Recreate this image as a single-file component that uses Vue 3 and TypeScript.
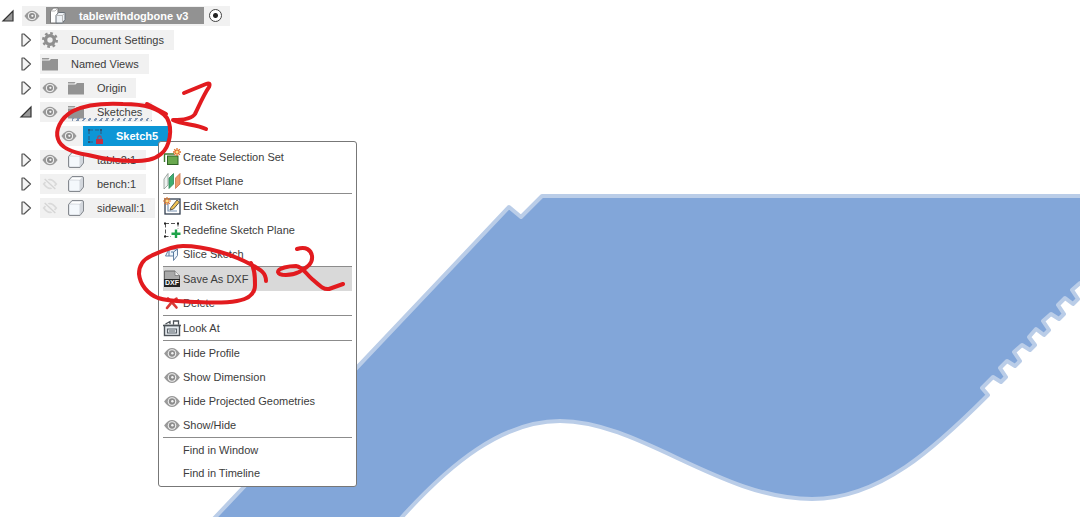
<script setup lang="ts">
import { ref } from 'vue'

interface TreeNode {
  id: string
  label: string
  icon: string
  level: 'root' | 'child' | 'leaf'
  expanded?: boolean
  visible?: boolean
}

interface MenuItem {
  label: string
  icon?: string
}

const nodes = ref<TreeNode[]>([
  { id: 'root', label: 'tablewithdogbone v3', icon: 'assembly', level: 'root', expanded: true, visible: true },
  { id: 'settings', label: 'Document Settings', icon: 'gear', level: 'child', expanded: false },
  { id: 'views', label: 'Named Views', icon: 'folder', level: 'child', expanded: false },
  { id: 'origin', label: 'Origin', icon: 'folder', level: 'child', expanded: false, visible: true },
  { id: 'sketches', label: 'Sketches', icon: 'folder', level: 'child', expanded: true, visible: true },
  { id: 'sketch5', label: 'Sketch5', icon: 'sketch', level: 'leaf', visible: true },
  { id: 'table2', label: 'table2:1', icon: 'body', level: 'child', expanded: false, visible: true },
  { id: 'bench', label: 'bench:1', icon: 'body', level: 'child', expanded: false, visible: false },
  { id: 'sidewall', label: 'sidewall:1', icon: 'body', level: 'child', expanded: false, visible: false },
])

const selected = ref('sketch5')
const activeItem = ref('Save As DXF')

const groups: MenuItem[][] = [
  [
    { label: 'Create Selection Set', icon: 'selection' },
    { label: 'Offset Plane', icon: 'offset' },
  ],
  [
    { label: 'Edit Sketch', icon: 'edit' },
    { label: 'Redefine Sketch Plane', icon: 'redefine' },
    { label: 'Slice Sketch', icon: 'slice' },
  ],
  [
    { label: 'Save As DXF', icon: 'dxf' },
    { label: 'Delete', icon: 'delete' },
  ],
  [{ label: 'Look At', icon: 'look' }],
  [
    { label: 'Hide Profile', icon: 'eye' },
    { label: 'Show Dimension', icon: 'eye' },
    { label: 'Hide Projected Geometries', icon: 'eye' },
    { label: 'Show/Hide', icon: 'eye' },
  ],
  [{ label: 'Find in Window' }, { label: 'Find in Timeline' }],
]
</script>

<template>
  <main class="stage">
    <svg class="defs" aria-hidden="true">
      <symbol id="eye" viewBox="0 0 18 14">
        <path d="M0.5 7C3.5 2.6 6 1 9 1S14.5 2.6 17.5 7C14.5 11.4 12 13 9 13S3.5 11.4 0.5 7Z" fill="#999" />
        <circle cx="9" cy="7" r="4.6" fill="#f0f0f0" />
        <circle cx="9" cy="7" r="3.4" fill="#8c8c8c" />
        <circle cx="9.4" cy="6.8" r="1.3" fill="#f4f4f4" />
      </symbol>
      <symbol id="eye-off" viewBox="0 0 18 14">
        <path d="M2 7C5 3 7 2 9 2S13 3 16 7C13 11 11 12 9 12S5 11 2 7Z" fill="none" stroke="#dadada" stroke-width="2" />
        <circle cx="9" cy="7" r="2" fill="#dadada" />
        <path d="M3 1L15 13" stroke="#f1f1f1" stroke-width="4" />
        <path d="M3 1.5L15 12.5" stroke="#d4d4d4" stroke-width="1.5" />
      </symbol>
      <symbol id="open" viewBox="0 0 14 14">
        <path d="M12 2V12H2Z" fill="#999" stroke="#333" stroke-width="1.2" />
      </symbol>
      <symbol id="closed" viewBox="0 0 14 14">
        <path d="M3 1H5L11.5 7L5 13H3Z" fill="#f4f4f4" stroke="#555" stroke-width="1.2" stroke-linejoin="round" />
      </symbol>
      <symbol id="gear" viewBox="0 0 20 20">
        <circle cx="10" cy="10" r="4.4" fill="none" stroke="#8f8f8f" stroke-width="3.4" />
        <circle cx="10" cy="10" r="6.7" fill="none" stroke="#8f8f8f" stroke-width="2.6" stroke-dasharray="2.63 2.63" />
      </symbol>
      <symbol id="folder" viewBox="0 0 20 20">
        <path d="M2 4H9.5L8.5 5.5H2Z" fill="#999" />
        <path d="M2 6.5H9.5L11 5H18V16.5H2Z" fill="#939393" />
      </symbol>
      <symbol id="assembly" viewBox="0 0 20 20">
        <path d="M2.5 5L5.5 2H10V17H2.5Z" fill="#fff" stroke="#777" />
        <path d="M2.5 5H7L10 2" fill="none" stroke="#999" stroke-width=".7" />
        <path d="M8 9.5L10.5 6.5H17V13.5L14.5 17H8Z" fill="#eef2f6" stroke="#687078" />
        <path d="M8.5 9.5H14.5L17 6.5M14.5 9.5V16.5" fill="none" stroke="#aaa" stroke-width=".8" />
      </symbol>
      <symbol id="body" viewBox="0 0 20 20">
        <path d="M2.5 6.5L6 2.5H16Q17.5 2.5 17.5 4V13L14 17.5H4Q2.5 17.5 2.5 16Z" fill="#d3d7dd" stroke="#85898f" stroke-linejoin="round" />
        <rect x="3.5" y="6.5" width="10" height="10" rx="1" fill="#f4f8fc" />
        <path d="M4 5.5L6.5 3.5H16L13.8 5.8Z" fill="#fff" />
      </symbol>
      <symbol id="sketch" viewBox="0 0 20 20">
        <path d="M4 4H16V10M4 4V16H10" fill="none" stroke="#2b6188" stroke-width="1.2" stroke-dasharray="4 2" />
        <path d="M3 3H5V5H3ZM15 3H17V5H15ZM3 15H5V17H3Z" fill="#2b5578" />
        <path d="M12.8 13V11.5Q12.8 9.8 14.5 9.8T16.2 11.5V13" fill="none" stroke="#9c4763" stroke-width="1.2" />
        <rect x="11" y="13" width="7" height="5" fill="#c72f43" />
      </symbol>
      <symbol id="selection" viewBox="0 0 18 18">
        <path d="M1.5 14V6H11" fill="none" stroke="#3d7a2f" stroke-width="1.4" />
        <rect x="4.5" y="8" width="10.5" height="8.5" fill="#69a84e" stroke="#2f6426" />
        <path d="M14 0V8M10 4H18M11.2 1.2L16.8 6.8M16.8 1.2L11.2 6.8" stroke="#e0702a" stroke-width="1.3" />
        <circle cx="14" cy="4" r="1.5" fill="#ffe08a" />
      </symbol>
      <symbol id="offset" viewBox="0 0 18 18">
        <path d="M1 7L5 1.5V13L1 17Z" fill="#eef2f1" stroke="#8b9690" stroke-width=".8" />
        <path d="M6 6L10.5 1.5V12L6 16.5Z" fill="#3fae72" stroke="#2d8757" stroke-width=".8" />
        <path d="M12.5 6L17 1.5V12L12.5 16.5Z" fill="#ee9a6c" stroke="#cb744a" stroke-width=".8" />
      </symbol>
      <symbol id="edit" viewBox="0 0 18 18">
        <rect x="2" y="2" width="15" height="15" fill="#fff" stroke="#333f50" stroke-width="1.3" />
        <path d="M5 6V14H14" fill="none" stroke="#7894b4" stroke-width="1.2" />
        <path d="M8 10.5L14 3L16.5 5L10.5 12L7 13Z" fill="#f0c254" stroke="#4e4b44" stroke-width=".9" />
        <path d="M4 0V8M0 4H8M1.2 1.2L6.8 6.8M6.8 1.2L1.2 6.8" stroke="#e0752a" stroke-width="1.1" />
        <circle cx="4" cy="4" r="1.5" fill="#ffe08a" />
      </symbol>
      <symbol id="redefine" viewBox="0 0 18 18">
        <path d="M2 2.5H15V8M2.5 2.5V15.5H8" fill="none" stroke="#555" stroke-dasharray="4 2" />
        <path d="M1 1.5H3V3.5H1ZM14 1.5H16V3.5H14ZM1 14.5H3V16.5H1Z" fill="#222" />
        <path d="M13 8.5V17M8.5 12.7H17.5" stroke="#1fa34a" stroke-width="2.4" />
      </symbol>
      <symbol id="slice" viewBox="0 0 18 18">
        <path d="M2.5 11L6 4H14.5V10.5L10.5 15.5V11Z" fill="#edf4fb" stroke="#6682a3" />
        <path d="M6 4V11M10.5 11V7L14.5 4M8 7H10.5" fill="none" stroke="#54799f" />
      </symbol>
      <symbol id="dxf" viewBox="0 0 18 18">
        <path d="M1.5 1H12L16.5 5.5V10H1.5Z" fill="#a9a9a9" stroke="#666" />
        <path d="M12 1V5.5H16.5" fill="#eee" stroke="#777" stroke-width=".8" />
        <rect x="1" y="9" width="16" height="8" fill="#252525" />
      </symbol>
      <symbol id="delete" viewBox="0 0 18 18">
        <path d="M5 4.5Q9 8 13.5 13.5M13.5 4.5Q8 8 4 14" fill="none" stroke="#d93a36" stroke-width="2.6" stroke-linecap="round" />
      </symbol>
      <symbol id="look" viewBox="0 0 18 18">
        <rect x="1.5" y="6.5" width="15" height="10" fill="#e9eef2" stroke="#4d5359" stroke-width="1.4" />
        <path d="M4.5 10H13.5V14H4.5ZM6 12H12" fill="none" stroke="#565e66" stroke-width="1.2" />
        <path d="M0 6.5H18M2.5 5L7 2.5V5M10.5 5.5V2H15.5V5.5" fill="none" stroke="#4d5359" stroke-width="1.3" />
      </symbol>
    </svg>

    <svg class="canvas" viewBox="0 0 1080 517" preserveAspectRatio="xMinYMin slice" role="img" aria-label="Table profile sketch">
      <path
        class="profile"
        d="M1090 196H542L521 217L509 207L205 528H392L402 517C450 464 502 421 560 421C640 421 720 499 812 499C880 499 935 448 988 395L982 388L993 377L1001 382L1006 377L1000 368L1007 361L1015 366L1020 361L1014 352L1022 345L1030 350L1035 345L1029 337L1036 329L1044 335L1049 330L1043 321L1051 314L1059 319L1064 314L1058 305L1065 298L1073 304L1078 299L1072 290L1080 283L1088 288V283Z"
      />
    </svg>

    <nav class="browser" aria-label="Browser">
      <ul class="tree">
        <li v-for="node in nodes" :key="node.id" class="row" :class="node.level">
          <button
            v-if="node.expanded !== undefined"
            type="button"
            class="toggle"
            :aria-label="`Toggle ${node.label}`"
            :aria-expanded="node.expanded"
            @click="node.expanded = !node.expanded"
          >
            <svg><use :href="node.expanded ? '#open' : '#closed'" /></svg>
          </button>
          <div class="pill">
            <button
              v-if="node.visible !== undefined"
              type="button"
              class="eye"
              :aria-label="`Visibility of ${node.label}`"
              :aria-pressed="node.visible"
              @click="node.visible = !node.visible"
            >
              <svg><use :href="node.visible ? '#eye' : '#eye-off'" /></svg>
            </button>
            <button
              type="button"
              class="label"
              :class="{ selected: selected === node.id, bare: node.visible === undefined, parent: node.id === 'sketches' }"
              @click="selected = node.id"
            >
              <svg class="node-icon"><use :href="`#${node.icon}`" /></svg>
              <span>{{ node.label }}</span>
            </button>
            <input v-if="node.level === 'root'" type="radio" class="activate" checked aria-label="Activate component" />
          </div>
        </li>
      </ul>
    </nav>

    <div class="menu" role="menu">
      <div v-for="(group, index) in groups" :key="index" class="group" role="group">
        <button
          v-for="item in group"
          :key="item.label"
          type="button"
          role="menuitem"
          class="item"
          :class="{ active: activeItem === item.label, plain: !item.icon }"
          @mouseenter="activeItem = item.label"
        >
          <svg v-if="item.icon" class="item-icon" :class="{ small: item.icon === 'eye' }" aria-hidden="true">
            <use :href="`#${item.icon}`" />
            <text v-if="item.icon === 'dxf'" class="badge" x="9" y="15">DXF</text>
          </svg>
          <span>{{ item.label }}</span>
        </button>
      </div>
    </div>

    <svg class="marks" viewBox="0 0 360 320" aria-hidden="true">
      <path d="M147 104L166 114M167 118C158 106 140 104 123 104C103 103 85 105 73 111C60 118 55 131 58 139C61 149 75 153 88 155C104 159 118 161 133 161C145 161 154 160 161 154C170 147 173 129 167 118" />
      <path d="M184 93L206 84Q211 82 209 87C203 96 199 106 195 114Q191 120 173 120C183 125 196 124 206 129" />
      <path d="M266 281C266 273 261 270 252 265C234 255 206 246 183 246C171 246 160 252 151 256C142 260 139 267 139 274C140 285 148 294 158 298C170 302 184 301 197 302C213 303 226 303 237 301C249 299 255 294 255 285C255 277 255 269 251 263" />
      <path d="M297 249C306 246 311 250 312 256C313 264 307 267 299 272C291 276 279 276 278 272C278 268 289 266 296 266C303 267 306 274 312 279C319 285 323 290 329 289L343 284" />
    </svg>
  </main>
</template>

<style>
body {
  margin: 0;
  background: #fff;
}
</style>

<style scoped>
.stage {
  position: relative;
  min-height: 100vh;
  overflow: hidden;
  box-sizing: border-box;
  padding-top: 3px;
  background: #fff;
  color: #3c3c3c;
  font-family: "Liberation Sans", Arial, sans-serif;
  font-size: 11px;
  line-height: 16px;
}

.defs {
  position: absolute;
  width: 0;
  height: 0;
}

.canvas {
  position: absolute;
  inset: 0;
  width: 100%;
  height: 100%;
}

.profile {
  fill: #82a6d9;
  stroke: #bacde8;
  stroke-width: 4px;
  stroke-linejoin: round;
}

button {
  margin: 0;
  padding: 0;
  border: 0;
  background: none;
  color: inherit;
  font: inherit;
  text-align: left;
  white-space: nowrap;
}

.browser {
  position: relative;
}

.tree {
  margin: 0;
  padding: 0;
  list-style: none;
}

.row {
  display: flex;
  align-items: center;
  gap: 7px;
  height: 24px;
}

.root {
  height: 25px;
  padding-left: 1px;
}

.child {
  padding-left: 19px;
}

.leaf {
  padding-left: 59px;
}

.toggle,
.toggle svg {
  display: block;
  width: 14px;
  height: 14px;
}

.pill {
  display: flex;
  align-items: center;
  gap: 4px;
  height: 20px;
  background: #f1f1f1;
}

.eye {
  display: flex;
  justify-content: center;
  width: 20px;
}

.eye svg {
  width: 16px;
  height: 14px;
}

.label {
  display: flex;
  align-items: center;
  gap: 11px;
  height: 20px;
  padding: 0 10px 0 2px;
}

.label.bare {
  padding-left: 0;
}

.label.selected {
  background: #0d96d6;
  color: #fff;
  font-weight: 700;
}

.root .label {
  height: 17px;
  padding-right: 16px;
  background: #929292;
  color: #fff;
  font-weight: 700;
}

.label.parent {
  position: relative;
}

.label.parent::after {
  content: "";
  position: absolute;
  left: 8px;
  right: 0;
  bottom: 1px;
  height: 3px;
  background: repeating-linear-gradient(120deg, #8296b3 0 2px, transparent 2px 5px);
}

.node-icon {
  width: 20px;
  height: 20px;
}

.activate {
  appearance: none;
  width: 13px;
  height: 13px;
  margin: 0 8px 0 1px;
  border: 1px solid #444;
  border-radius: 50%;
  background: radial-gradient(circle, #222 0 2px, #fff 3px);
}

.menu {
  position: absolute;
  top: 141px;
  left: 158px;
  box-sizing: border-box;
  width: 199px;
  padding: 3px 4px 2px;
  border: 1px solid #777;
  border-radius: 3px;
  background: #fff;
}

.group + .group {
  border-top: 1px solid #8c8c8c;
}

.item {
  display: flex;
  align-items: center;
  gap: 2px;
  width: 100%;
  height: 24px;
}

.item.plain {
  height: 23px;
  padding-left: 20px;
}

.item.active {
  background: #d9d9d9;
}

.item-icon {
  width: 18px;
  height: 18px;
}

.item-icon.small {
  width: 18px;
  height: 13px;
}

.badge {
  fill: #fff;
  font-size: 7px;
  font-weight: 700;
  text-anchor: middle;
}

.marks {
  position: absolute;
  top: 0;
  left: 0;
  width: 360px;
  height: 320px;
  pointer-events: none;
}

.marks path {
  fill: none;
  stroke: #e21b1f;
  stroke-width: 4px;
  stroke-linecap: round;
  stroke-linejoin: round;
}
</style>
